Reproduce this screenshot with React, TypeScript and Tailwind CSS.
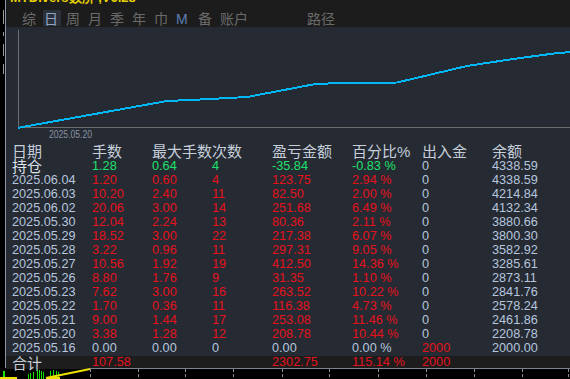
import React from "react";

const BLUE = "text-[#b6c6de]";
const RED = "text-[#e5121c]";
const GREEN = "text-[#1fe06c]";
const HEAD = "text-[#c6ceda]";

type Cell = [string, string];

const days: [string, string, string, string, string, string, string][] = [
  ["2025.06.04", "1.20", "0.60", "4", "123.75", "2.94 %", "4338.59"],
  ["2025.06.03", "10.20", "2.40", "11", "82.50", "2.00 %", "4214.84"],
  ["2025.06.02", "20.06", "3.00", "14", "251.68", "6.49 %", "4132.34"],
  ["2025.05.30", "12.04", "2.24", "13", "80.36", "2.11 %", "3880.66"],
  ["2025.05.29", "18.52", "3.00", "22", "217.38", "6.07 %", "3800.30"],
  ["2025.05.28", "3.22", "0.96", "11", "297.31", "9.05 %", "3582.92"],
  ["2025.05.27", "10.56", "1.92", "19", "412.50", "14.36 %", "3285.61"],
  ["2025.05.26", "8.80", "1.76", "9", "31.35", "1.10 %", "2873.11"],
  ["2025.05.23", "7.62", "3.00", "16", "263.52", "10.22 %", "2841.76"],
  ["2025.05.22", "1.70", "0.36", "11", "116.38", "4.73 %", "2578.24"],
  ["2025.05.21", "9.00", "1.44", "17", "253.08", "11.46 %", "2461.86"],
  ["2025.05.20", "3.38", "1.28", "12", "208.78", "10.44 %", "2208.78"],
];

const rows: Cell[][] = [
  [
    ["持仓", "text-[#dde3ea] cjk"],
    ["1.28", GREEN],
    ["0.64", GREEN],
    ["4", GREEN],
    ["-35.84", GREEN],
    ["-0.83 %", GREEN],
    ["0", BLUE],
    ["4338.59", BLUE],
  ],
  ...days.map((d) => [
    [d[0], BLUE] as Cell,
    [d[1], RED] as Cell,
    [d[2], RED] as Cell,
    [d[3], RED] as Cell,
    [d[4], RED] as Cell,
    [d[5], RED] as Cell,
    ["0", BLUE] as Cell,
    [d[6], BLUE] as Cell,
  ]),
  [
    ["2025.05.16", BLUE],
    ["0.00", BLUE],
    ["0.00", BLUE],
    ["0", BLUE],
    ["0.00", BLUE],
    ["0.00 %", BLUE],
    ["2000", RED],
    ["2000.00", BLUE],
  ],
];

const GRID = "grid grid-cols-[80px_60px_60px_60px_80px_70px_70px_1fr] pl-[6px]";
const NUM = "font-['Liberation_Sans',Arial,sans-serif] text-[12.7px]";
const CJK = "font-['Noto_Sans_CJK_SC',sans-serif]";

function CellText({ c }: { c: Cell }) {
  const isCjk = c[1].includes("cjk");
  return (
    <div
      className={`whitespace-nowrap ${isCjk ? `${CJK} text-[15px] leading-[14px]` : NUM} ${c[1].replace(" cjk", "")}`}
    >
      {c[0]}
    </div>
  );
}

const linePts = [
  [12, 100.8],
  [161, 74],
  [194, 72.5],
  [241, 70],
  [311, 56.7],
  [351, 56],
  [391, 55.5],
  [461, 39],
  [507, 32],
  [554, 25.7],
  [564, 25.3],
]
  .map((p) => p.join(","))
  .join(" ");

const ticks = [90, 138, 185, 233, 282, 329, 378, 426, 474, 522, 568];

export default function App() {
  const tabs = ["综", "日", "周", "月", "季", "年", "巾", "M", "备"];
  return (
    <div className="w-[570px] h-[379px] bg-black overflow-hidden flex flex-col">
      <div className="flex h-[368px]">
        {/* left strip */}
        <div className="w-[5px] bg-black flex flex-col pt-[10px] pl-[3px] gap-[8px]">
          <div className="w-[1px] h-[14px] bg-[#9a9a9a]" />
          <div className="w-[1px] h-[4px] bg-[#9a9a9a]" />
          <div className="w-[1px] h-[12px] bg-[#9a9a9a]" />
          <div className="w-[1px] h-[10px] bg-[#9a9a9a]" />
        </div>
        <div className="w-[1px] bg-[#8a95a7]" />
        <div className="flex-1 flex flex-col">
          {/* top bar */}
          <div className="h-[27px] bg-[#1c1c1c] flex flex-col">
            <div className="h-[9px] overflow-hidden pl-[4px]">
              <div className="mt-[-9px] leading-[13px] text-[13px] font-bold text-[#e8d200] font-['Liberation_Sans',sans-serif] whitespace-nowrap">
                MTDivers数济 ,V6.28
              </div>
            </div>
            <div className={`h-[18px] flex items-center pl-[16px] text-[14px] leading-[16px] text-[#6b6b6b] ${CJK}`}>
              {tabs.map((t) => (
                <div key={t} className="w-[22px] shrink-0">
                  {t === "日" ? (
                    <span className="inline-block -ml-[1px] pl-[1px] pr-[3px] bg-[#2a313b] text-[#8fa6c8] leading-[16px]">
                      日
                    </span>
                  ) : t === "M" ? (
                    <span className="font-['Liberation_Sans',sans-serif] text-[#5d7fb4]">M</span>
                  ) : (
                    <span>{t}</span>
                  )}
                </div>
              ))}
              <div className="w-[87px] shrink-0">账户</div>
              <div className="shrink-0">路径</div>
            </div>
          </div>
          {/* chart */}
          <div className="h-[116px] bg-[#252a33]">
            <svg width="564" height="116" viewBox="0 0 564 116">
              <line x1="12.5" y1="3" x2="12.5" y2="101" stroke="#6e6e6e" strokeWidth="1" />
              <line x1="12" y1="100.5" x2="564" y2="100.5" stroke="#6e6e6e" strokeWidth="1" />
              <polyline
                points={linePts}
                fill="none"
                stroke="#00b8f6"
                strokeWidth="2"
                shapeRendering="crispEdges"
              />
              <text
                x="43"
                y="111"
                fontSize="11.5"
                textLength="43"
                lengthAdjust="spacingAndGlyphs"
                fill="#8a94a2"
                fontFamily="Liberation Sans, Arial, sans-serif"
              >
                2025.05.20
              </text>
            </svg>
          </div>
          {/* table */}
          <div className="flex-1 bg-[#252a33] flex flex-col">
            <div className={`${GRID} h-[16px] leading-[16px] text-[15px] ${HEAD} ${CJK}`}>
              <div>日期</div>
              <div>手数</div>
              <div className="col-span-2">最大手数次数</div>
              <div>盈亏金额</div>
              <div>
                百分比<span className="font-['Liberation_Sans',sans-serif]">%</span>
              </div>
              <div>出入金</div>
              <div>余额</div>
            </div>
            {rows.map((r, i) => (
              <div key={i} className={`${GRID} h-[14px] leading-[14px]`}>
                {r.map((c, j) => (
                  <CellText key={j} c={c} />
                ))}
              </div>
            ))}
            <div className="h-[1px]" />
            <div className={`${GRID} h-[13px] leading-[13px] bg-[#1d1d1d]`}>
              <div className={`${CJK} text-[15px] leading-[13px] ${HEAD}`}>合计</div>
              <div className={`${NUM} ${RED}`}>107.58</div>
              <div />
              <div />
              <div className={`${NUM} ${RED}`}>2302.75</div>
              <div className={`${NUM} ${RED}`}>115.14 %</div>
              <div className={`${NUM} ${RED}`}>2000</div>
              <div />
            </div>
          </div>
        </div>
      </div>
      {/* bottom strip */}
      <svg width="570" height="11" viewBox="0 0 570 11" className="block">
        <line x1="90" y1="0.5" x2="570" y2="0.5" stroke="#7c838e" strokeWidth="1" />
        {ticks.map((x) => (
          <line key={x} x1={x + 0.5} y1="1" x2={x + 0.5} y2="11" stroke="#8a8a8a" strokeWidth="1" strokeDasharray="3 2" />
        ))}
        <g fill="#18e000" shapeRendering="crispEdges">
          <rect x="3" y="3" width="2" height="8" />
          <rect x="28" y="6" width="1" height="5" />
          <rect x="30" y="5" width="1" height="6" />
          <rect x="33" y="4" width="1" height="7" />
          <rect x="37" y="2" width="1" height="9" />
          <rect x="39" y="2" width="1" height="9" />
          <rect x="41" y="3" width="1" height="8" />
          <rect x="43" y="4" width="1" height="7" />
          <rect x="50" y="3" width="1" height="8" />
          <rect x="53" y="2" width="1" height="9" />
          <rect x="56" y="3" width="1" height="8" />
          <rect x="58" y="4" width="1" height="7" />
        </g>
        <rect x="0" y="9" width="17" height="2" fill="#f0e000" />
        <polyline points="46,10 90,1" fill="none" stroke="#f0e000" strokeWidth="2" />
        <rect x="46" y="9" width="14" height="2" fill="#f0e000" />
      </svg>
    </div>
  );
}
